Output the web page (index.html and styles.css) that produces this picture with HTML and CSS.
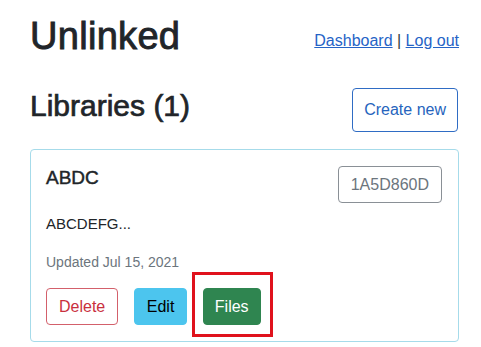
FILE: index.html
```html
<!DOCTYPE html>
<html lang="en">
<head>
<meta charset="utf-8">
<title>Unlinked</title>
<link rel="stylesheet" href="styles.css">
</head>
<body>
<div class="page">
  <header class="top">
    <h1 class="title">Unlinked</h1>
    <nav class="nav"><a href="#">Dashboard</a> | <a href="#">Log out</a></nav>
  </header>
  <section class="section-head">
    <h2 class="section-title">Libraries (1)</h2>
    <button class="btn btn-outline-primary btn-create">Create new</button>
  </section>
  <div class="card">
    <div class="card-head">
      <h5 class="card-title">ABDC</h5>
      <span class="code-badge">1A5D860D</span>
    </div>
    <p class="card-text">ABCDEFG...</p>
    <p class="card-meta">Updated Jul 15, 2021</p>
    <div class="actions">
      <button class="btn btn-outline-danger">Delete</button>
      <button class="btn btn-info">Edit</button>
      <span class="mark-wrap">
        <button class="btn btn-success">Files</button>
        <span class="mark"></span>
      </span>
    </div>
  </div>
</div>
</body>
</html>
```

FILE: styles.css
```css
* { box-sizing: border-box; }
html, body { margin: 0; padding: 0; background: #fff; }
body {
  font-family: "Liberation Sans", Arial, Helvetica, sans-serif;
  color: #212529;
  font-size: 16px;
  line-height: 1.5;
}
.page {
  width: 481px;
  padding: 14px 22px 0 30px;
}
.top {
  display: flex;
  justify-content: space-between;
  align-items: flex-start;
}
.title {
  margin: 0;
  font-size: 38px;
  line-height: 1.2;
  font-weight: 400;
  -webkit-text-stroke: 0.9px #212529;
  letter-spacing: 0.3px;
}
.nav {
  margin-top: 15px;
  font-size: 16px;
  line-height: 24px;
  color: #343a40;
}
.nav a { color: #2563c6; text-decoration: underline; }
.section-head {
  display: flex;
  justify-content: space-between;
  align-items: flex-start;
  margin-top: 28px;
}
.section-title {
  margin: 0;
  font-size: 30px;
  line-height: 36px;
  font-weight: 400;
  -webkit-text-stroke: 0.7px #212529;
}
.btn {
  font-family: inherit;
  font-size: 16px;
  line-height: 23px;
  padding: 6px 12px;
  border: 1px solid transparent;
  border-radius: 4px;
  background: transparent;
  cursor: pointer;
  white-space: nowrap;
}
.btn-create {
  padding: 9px 11px 9px 11px;
  line-height: 24px;
  margin-right: 1px;
}
.btn-outline-primary { color: #2664bd; border-color: #2f6cc4; }
.btn-outline-danger { color: #c9303e; border-color: #d3606b; }
.btn-info { background: #4cc5ee; border-color: #4cc5ee; color: #000; padding-left: 11.5px; padding-right: 11.5px; }
.btn-success { background: #2f8550; border-color: #2f8550; color: #fff; padding-left: 11px; padding-right: 11px; }
.card {
  margin-top: 17px;
  border: 1px solid #a6dbea;
  border-radius: 4px;
  padding: 16px 15px 16px 15px;
}
.card-head {
  display: flex;
  justify-content: space-between;
  align-items: flex-start;
}
.card-title {
  margin: 0;
  font-size: 19px;
  line-height: 23px;
  font-weight: 400;
  -webkit-text-stroke: 0.45px #212529;
}
.code-badge {
  display: inline-block;
  margin-right: 1px;
  padding: 6px 12px;
  line-height: 23px;
  font-size: 16px;
  color: #6c757d;
  border: 1px solid #8a9096;
  border-radius: 4px;
}
.card-text {
  margin: 10px 0 0;
  font-size: 15px;
  line-height: 22.5px;
}
.card-meta {
  margin: 17px 0 0;
  font-size: 14px;
  line-height: 21px;
  color: #6c757d;
}
.actions {
  margin-top: 15px;
  display: flex;
  gap: 16px;
}
.mark-wrap { position: relative; display: inline-block; }
.mark {
  position: absolute;
  left: -11px;
  top: -16px;
  width: 81px;
  height: 65px;
  border: 3px solid #e0121c;
  pointer-events: none;
}
```
